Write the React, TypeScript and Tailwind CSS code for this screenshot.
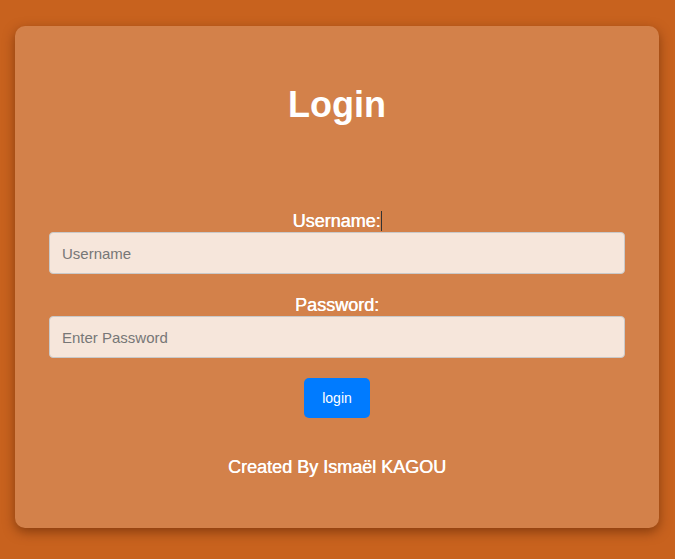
import React from 'react'

export default function App() {
  return (
    <div
      className="min-h-screen w-full bg-[#c8621e] pt-[26px] pl-[15px]"
      style={{ fontFamily: '"Liberation Sans", Arial, sans-serif' }}
    >
      <div className="w-[644px] h-[502px] rounded-[10px] bg-[#d3814a] shadow-[0_4px_12px_rgba(80,30,0,0.55)] px-[34px] pt-[57px]">
        {/* Title */}
        <h1 className="text-center text-[36px] leading-[43px] font-bold text-white">Login</h1>

        {/* Form */}
        <form className="mt-[84px] flex flex-col" onSubmit={(e) => e.preventDefault()}>
          <label className="text-center text-[18px] leading-[22px] font-normal text-white [text-shadow:0.4px_0_0_#fff]">
            Username:<span className="inline-block w-px h-[20px] align-[-4px] bg-[#333]" />
          </label>
          <input
            type="text"
            placeholder="Username"
            className="h-[42px] w-full rounded-[4px] border border-[#c9c9c9] bg-[#f6e6db] px-[12px] text-[15px] text-[#333] placeholder:text-[#777] outline-none"
          />

          <label className="mt-[20px] text-center text-[18px] leading-[22px] font-normal text-white [text-shadow:0.4px_0_0_#fff]">
            Password:
          </label>
          <input
            type="password"
            placeholder="Enter Password"
            className="h-[42px] w-full rounded-[4px] border border-[#c9c9c9] bg-[#f6e6db] px-[12px] text-[15px] text-[#333] placeholder:text-[#777] outline-none"
          />

          <div className="mt-[20px] flex justify-center">
            <button
              type="submit"
              className="h-[40px] w-[66px] rounded-[5px] bg-[#007bff] text-[14px] text-white"
            >
              login
            </button>
          </div>
        </form>

        {/* Footer */}
        <p className="mt-[38px] text-center text-[18px] leading-[22px] font-normal text-white [text-shadow:0.4px_0_0_#fff]">
          Created By Ismaël KAGOU
        </p>
      </div>
    </div>
  )
}
